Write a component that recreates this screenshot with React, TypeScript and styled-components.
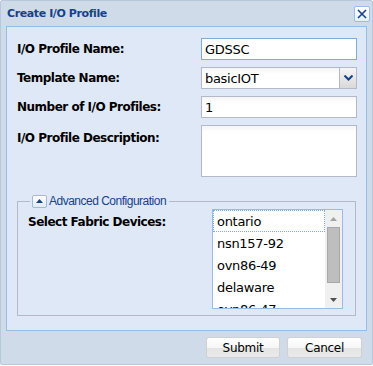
import React from 'react';
import styled, { createGlobalStyle } from 'styled-components';

const GlobalStyle = createGlobalStyle`
  html, body {
    margin: 0;
    padding: 0;
    background: #fff;
  }
  * {
    box-sizing: border-box;
  }
`;

const Window = styled.div`
  width: 373px;
  height: 365px;
  border: 1px solid #b7c8dd;
  border-radius: 2px;
  background: #cfdbe9;
  font-family: 'DejaVu Sans', Tahoma, sans-serif;
  display: flex;
  flex-direction: column;
`;

const Header = styled.div`
  height: 25px;
  display: flex;
  align-items: center;
  justify-content: space-between;
  padding: 0 2px 0 6px;
`;

const Title = styled.span`
  font-size: 11px;
  font-weight: bold;
  letter-spacing: -0.4px;
  color: #15428b;
`;

const CloseButton = styled.button`
  width: 16px;
  height: 16px;
  padding: 0;
  margin-top: 1px;
  border: 1px solid #99bbe8;
  border-radius: 2px;
  background: linear-gradient(#ffffff, #e7eef8);
  display: flex;
  align-items: center;
  justify-content: center;
`;

const Body = styled.div`
  margin: 0 5px;
  height: 305px;
  border: 1px solid #99bbe8;
  background: #dfe8f6;
  padding: 11px 9px 0 10px;
`;

const FormGrid = styled.div`
  display: grid;
  grid-template-columns: 1fr 156px;
  row-gap: 7px;
  align-items: center;
`;

const Label = styled.label<{ $top?: number }>`
  font-size: 12px;
  font-weight: bold;
  letter-spacing: -0.5px;
  color: #000;
  align-self: ${(p) => (p.$top !== undefined ? 'start' : 'center')};
  padding-top: ${(p) => p.$top ?? 0}px;
`;

const TextInput = styled.div`
  height: 22px;
  border: 1px solid #b5b8c8;
  background: linear-gradient(#f4f4f4, #ffffff 6px);
  font-size: 13px;
  letter-spacing: -0.3px;
  padding: 0 3px;
  display: flex;
  align-items: center;
  color: #000;
`;

const Highlighted = styled(TextInput)`
  border-color: #7eadd9;
  background: #fff;
`;

const Combo = styled.div`
  height: 22px;
  border: 1px solid #b5b8c8;
  background: linear-gradient(#f4f4f4, #ffffff 6px);
  display: flex;
  align-items: stretch;
  font-size: 13px;
  letter-spacing: -0.3px;
`;

const ComboText = styled.div`
  flex: 1;
  padding: 0 3px;
  display: flex;
  align-items: center;
`;

const ComboTrigger = styled.div`
  width: 17px;
  border-left: 1px solid #b5b8c8;
  background: linear-gradient(#f5f5f5, #d9d9d9);
  display: flex;
  align-items: center;
  justify-content: center;
`;

const TextArea = styled.div`
  height: 52px;
  border: 1px solid #b5b8c8;
  background: linear-gradient(#f4f4f4, #ffffff 6px);
`;

const FieldSet = styled.fieldset`
  margin: 17px 1px 0 0;
  padding: 0 10px 0 10px;
  height: 122px;
  border: 1px solid #b5b8c8;
  display: grid;
  grid-template-columns: 1fr 133px;
  align-items: start;
`;

const Legend = styled.legend`
  display: flex;
  align-items: center;
  gap: 2px;
  padding: 0 3px 0 2px;
  margin-left: 2px;
  font-family: 'Liberation Sans', Arial, sans-serif;
  font-size: 12px;
  letter-spacing: -0.5px;
  color: #15428b;
`;

const Toggle = styled.span`
  width: 15px;
  height: 13px;
  border: 1px solid #99bbe8;
  border-radius: 2px;
  background: linear-gradient(#ffffff, #e3ebf6);
  display: flex;
  align-items: center;
  justify-content: center;
`;

const ListBox = styled.div`
  margin-top: 1px;
  height: 100px;
  border: 1px solid #99bbe8;
  background: #fff;
  display: flex;
  overflow: hidden;
  margin-right: 2px;
`;

const Items = styled.div`
  flex: 1;
  display: flex;
  flex-direction: column;
`;

const Item = styled.div<{ $focus?: boolean }>`
  height: 22px;
  flex: none;
  padding: 0 3px;
  display: flex;
  align-items: center;
  font-size: 13px;
  letter-spacing: -0.3px;
  color: #000;
  border: 1px dotted ${(p) => (p.$focus ? '#7eadd9' : 'transparent')};
`;

const ScrollBar = styled.div`
  width: 17px;
  background: #f0f0f0;
  display: flex;
  flex-direction: column;
  align-items: center;
`;

const Arrow = styled.div`
  height: 17px;
  width: 100%;
  display: flex;
  align-items: center;
  justify-content: center;
`;

const Thumb = styled.div`
  width: 13px;
  height: 56px;
  background: #bebebe;
  border: 1px solid #a8a8a8;
`;

const Track = styled.div`
  flex: 1;
`;

const Footer = styled.div`
  flex: 1;
  display: flex;
  justify-content: flex-end;
  align-items: flex-start;
  gap: 7px;
  padding: 6px 10px 0 0;
`;

const Button = styled.button<{ $width: number }>`
  width: ${(p) => p.$width}px;
  height: 21px;
  border: 1px solid #d0d0d0;
  border-radius: 3px;
  background: linear-gradient(#ffffff 0%, #f6f6f6 50%, #e4e4e4 51%, #eaeaea 100%);
  font-family: 'DejaVu Sans', Tahoma, sans-serif;
  font-size: 12px;
  letter-spacing: -0.3px;
  color: #000;
  padding: 0;
`;

const devices = ['ontario', 'nsn157-92', 'ovn86-49', 'delaware', 'ovn86-47'];

export default function App() {
  return (
    <>
      <GlobalStyle />
      <Window>
        <Header>
          <Title>Create I/O Profile</Title>
          <CloseButton aria-label="close">
            <svg width="10" height="10" viewBox="0 0 10 10">
              <path d="M1 1 L9 9 M9 1 L1 9" stroke="#15428b" strokeWidth="1.6" />
            </svg>
          </CloseButton>
        </Header>
        <Body>
          <FormGrid>
            <Label>I/O Profile Name:</Label>
            <Highlighted>GDSSC</Highlighted>
            <Label>Template Name:</Label>
            <Combo>
              <ComboText>basicIOT</ComboText>
              <ComboTrigger>
                <svg width="9" height="6" viewBox="0 0 9 6">
                  <path d="M0.5 0.5 L4.5 4.5 L8.5 0.5" fill="none" stroke="#15428b" strokeWidth="2" />
                </svg>
              </ComboTrigger>
            </Combo>
            <Label>Number of I/O Profiles:</Label>
            <TextInput>1</TextInput>
            <Label $top={6}>I/O Profile Description:</Label>
            <TextArea />
          </FormGrid>
          <FieldSet>
            <Legend>
              <Toggle>
                <svg width="7" height="4" viewBox="0 0 7 4">
                  <path d="M0 4 L3.5 0 L7 4 Z" fill="#15428b" />
                </svg>
              </Toggle>
              Advanced Configuration
            </Legend>
            <Label $top={7}>Select Fabric Devices:</Label>
            <ListBox>
              <Items>
                {devices.map((d, i) => (
                  <Item key={d} $focus={i === 0}>
                    {d}
                  </Item>
                ))}
              </Items>
              <ScrollBar>
                <Arrow>
                  <svg width="7" height="4" viewBox="0 0 7 4">
                    <path d="M0 4 L3.5 0 L7 4 Z" fill="#a3a3a3" />
                  </svg>
                </Arrow>
                <Thumb />
                <Track />
                <Arrow>
                  <svg width="7" height="4" viewBox="0 0 7 4">
                    <path d="M0 0 L3.5 4 L7 0 Z" fill="#505050" />
                  </svg>
                </Arrow>
              </ScrollBar>
            </ListBox>
          </FieldSet>
        </Body>
        <Footer>
          <Button $width={74}>Submit</Button>
          <Button $width={75}>Cancel</Button>
        </Footer>
      </Window>
    </>
  );
}
